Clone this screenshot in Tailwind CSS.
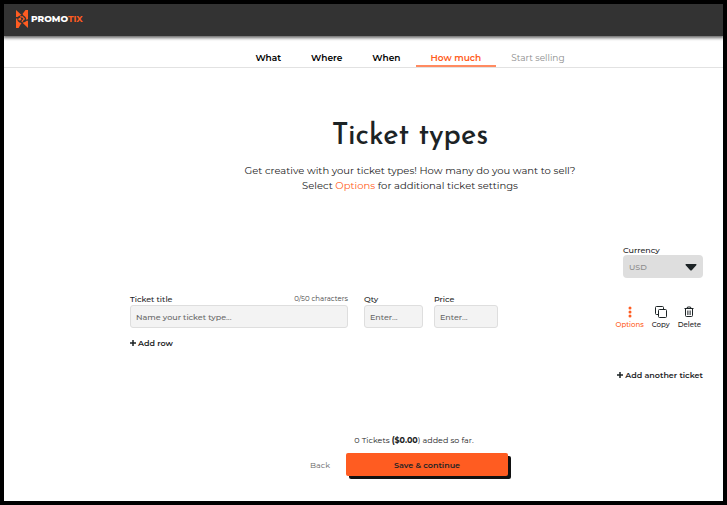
<!DOCTYPE html>
<html lang="en">
<head>
    <meta charset="UTF-8">
    <meta name="viewport" content="width=device-width, initial-scale=1.0">
    <title>Promotix - Ticket types</title>
    <script src="https://cdn.jsdelivr.net/npm/@tailwindcss/browser@4"></script>
</head>

<body class="flex flex-col min-h-screen bg-white border-4 border-black text-[#1c2325] font-['Montserrat','Inter',sans-serif] text-[8px] leading-[10px]">
    <header class="relative flex items-center h-8 px-3 bg-[#333333] shadow-[0_1px_3px_1px_rgba(0,0,0,0.6)]">
        <a href="#" class="flex items-center gap-[3px] pb-[2px]" aria-label="Promotix">
            <svg class="w-3 h-[18px]" viewBox="0 0 12 18" fill="#ff5c21">
                <path d="M0 0L5.500 5L3 6L1.500 7H0Z"/>
                <path d="M6.500 4L9.500 0H12V9L10.500 10L9.500 7L7.500 5.500Z"/>
                <path d="M0 8.500L1.300 8.500L1.700 11L3.500 12.500L5.500 13L2.500 18H0Z"/>
                <path d="M6.500 12.800L9 12L10.500 10.800H12V18Z"/>
                <circle cx="3.800" cy="9.200" r="1.400"/>
                <path d="M4 6.800L6.500 6.800L8.300 9L6.500 10.500L6 12" fill="none" stroke="#ff5c21" stroke-width="1.200"/>
            </svg>
            <span class="text-[9px] leading-3 font-extrabold text-white">PROMO<span class="font-bold text-[#ff5c21]">TIX</span></span>
        </a>
    </header>

    <nav class="flex justify-center h-8 pl-[93px] border-b border-[#e2e2e2] text-[9px] leading-3 font-semibold text-black whitespace-nowrap">
        <a href="#" class="px-[15px] pt-4">What</a>
        <a href="#" class="px-[15px] pt-4">Where</a>
        <a href="#" class="px-[15px] pt-4">When</a>
        <a href="#" class="px-[15px] pt-4 text-[#ff5c21] border-b-2 border-[#ff8a60]">How much</a>
        <a href="#" class="px-[15px] pt-4 font-normal text-[#8c8c8c]">Start selling</a>
    </nav>

    <main class="flex flex-col grow pl-[93px]">
        <section class="pt-[51px] text-center">
            <h1 class="font-['Josefin_Sans','Lato',sans-serif] text-[29px] leading-9 font-medium">Ticket types</h1>
            <p class="pt-2 text-[10px] leading-[15px]">
                Get creative with your ticket types! How many do you want to sell?<br>
                Select <a href="#" class="text-[#ff5c21]">Options</a> for additional ticket settings
            </p>
        </section>

        <form id="ticketForm" class="flex flex-col pt-[52px] pl-[33px] pr-5">
            <div class="self-end w-20">
                <label for="currency" class="block font-medium">Currency</label>
                <div class="relative">
                    <select id="currency" class="block appearance-none w-full h-[23px] px-[6px] rounded-[4px] bg-[#dedede] font-medium text-[#8c8c8c]">
                        <option>USD</option>
                    </select>
                    <svg class="absolute right-[6px] top-[9px] w-3 h-[7px] pointer-events-none" viewBox="0 0 12 7" fill="#1c2325"><path d="M1 0H11Q12 .5 11.300 1.200L7 6Q6 7 5 6L.7 1.200Q0 .5 1 0Z"/></svg>
                </div>
            </div>

            <div class="flex items-start pt-4">
                <div class="grow max-w-[218px] mr-4">
                    <div class="flex justify-between">
                        <label for="title" class="font-medium">Ticket title</label>
                        <span class="text-[7px] text-[#444444]">0/50 characters</span>
                    </div>
                    <input type="text" id="title" placeholder="Name your ticket type..." class="block w-full h-[23px] mt-[1px] px-[5px] rounded-[3px] border border-[#dedede] bg-[#f3f3f3] font-medium placeholder:text-[#666666]">
                </div>
                <div class="w-[59px] mr-[11px]">
                    <label for="qty" class="block font-medium">Qty</label>
                    <input type="text" id="qty" placeholder="Enter..." class="block w-full h-[23px] mt-[1px] px-[5px] rounded-[3px] border border-[#dedede] bg-[#f3f3f3] font-medium placeholder:text-[#666666]">
                </div>
                <div class="w-16">
                    <label for="price" class="block font-medium">Price</label>
                    <input type="text" id="price" placeholder="Enter..." class="block w-full h-[23px] mt-[1px] px-[5px] rounded-[3px] border border-[#dedede] bg-[#f3f3f3] font-medium placeholder:text-[#666666]">
                </div>
                <div class="flex gap-2 ml-auto pt-3 pr-[2px] text-[7px] font-medium">
                    <button type="button" class="flex flex-col items-center gap-[2px] text-[#ff5c21]">
                        <svg class="w-3 h-3" viewBox="0 0 12 12" fill="#ff5c21"><circle cx="6" cy="2" r="1.500"/><circle cx="6" cy="6" r="1.500"/><circle cx="6" cy="10" r="1.500"/></svg>
                        Options
                    </button>
                    <button type="button" class="flex flex-col items-center gap-[2px]">
                        <svg class="w-3 h-3" viewBox="0 0 12 12" fill="none" stroke="#1c2325"><rect x="3.500" y="3.500" width="8" height="8" rx="1"/><path d="M3.500 8.500H1.500Q.5 8.500 .5 7.500V1.500Q.5 .5 1.500 .5H7.500Q8.500 .5 8.500 1.500V3.500"/></svg>
                        Copy
                    </button>
                    <button type="button" class="flex flex-col items-center gap-[2px]">
                        <svg class="w-3 h-3" viewBox="0 0 12 12" fill="none" stroke="#1c2325"><path d="M1.500 2.500H10.500M4 2.500L4.500 1H7.500L8 2.500M2.500 2.500V9.500Q2.500 10.500 3.500 10.500H8.500Q9.500 10.500 9.500 9.500V2.500"/><path d="M4.600 4.500V9M6 4.500V9M7.400 4.500V9" stroke-width=".7"/></svg>
                        Delete
                    </button>
                </div>
            </div>

            <button type="button" class="self-start flex items-center gap-[2px] mt-2 font-semibold">
                <svg class="w-[6px] h-[6px]" viewBox="0 0 6 6" stroke="#1c2325" stroke-width="1.500"><path d="M3 0V6M0 3H6"/></svg>
                Add row
            </button>
            <button type="button" class="self-end flex items-center gap-[2px] mt-[22px] font-semibold">
                <svg class="w-[6px] h-[6px]" viewBox="0 0 6 6" stroke="#1c2325" stroke-width="1.500"><path d="M3 0V6M0 3H6"/></svg>
                Add another ticket
            </button>
        </form>

        <footer class="pt-[55px] pb-5">
            <p class="pl-2 text-center">0 Tickets <b class="font-bold">($0.00</b>) added so far.</p>
            <div class="flex justify-center items-center gap-4 pt-2 pr-[2px]">
                <button type="button" class="text-[#666666]">Back</button>
                <button type="submit" form="ticketForm" class="w-[162px] h-[23px] rounded-[2px] bg-[#ff5c21] font-semibold shadow-[3px_3px_0_#111111]">Save &amp; continue</button>
            </div>
        </footer>
    </main>
</body>
</html>
